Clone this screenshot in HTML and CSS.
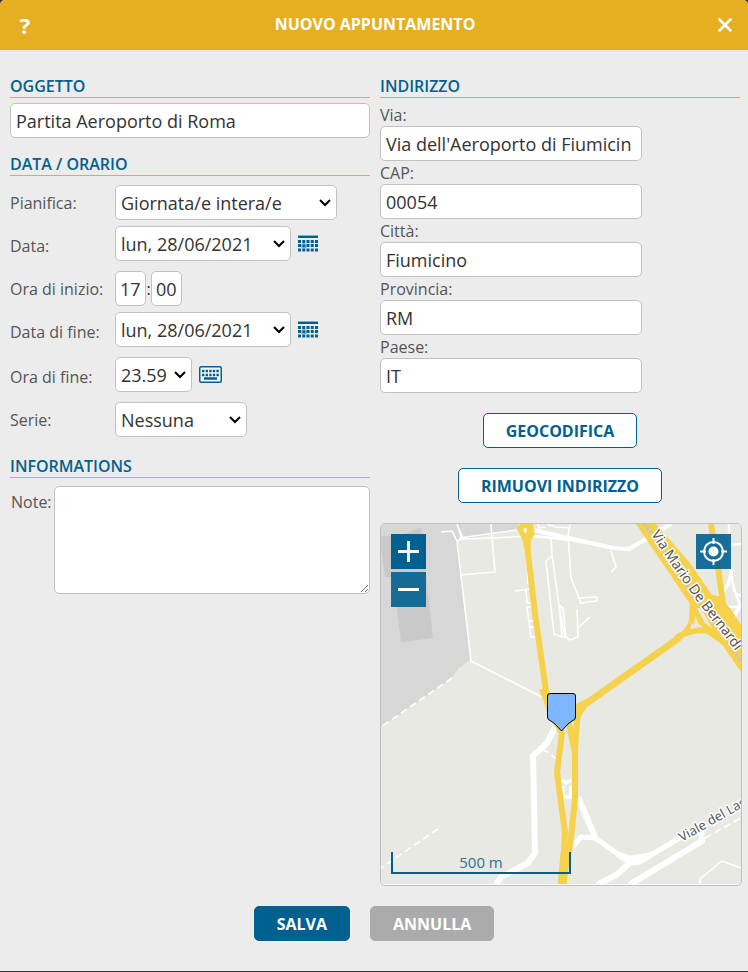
FILE: index.html
```html
<!DOCTYPE html>
<html lang="it">
<head>
<meta charset="utf-8">
<meta name="viewport" content="width=device-width, initial-scale=1">
<title>Nuovo appuntamento</title>
<link rel="stylesheet" href="styles.css">
</head>
<body>
<svg class="defs" aria-hidden="true">
  <defs>
    <symbol id="calendar" viewBox="0 0 20 17">
      <path d="M0 0h20v3H0z" fill="#7fb0c8"/>
      <path d="M0 1h20v2H0z" fill="#006190"/>
      <path d="M0 6.500h20M0 10.500h20M0 15h20" fill="none" stroke="#006190" stroke-width="2.800" stroke-dasharray="3 1.250"/>
      <circle cx="6" cy="11" r="3" fill="#5b9bbb" fill-opacity=".7"/>
      <path d="M5 10h2v2H5z" fill="#006190"/>
    </symbol>
    <symbol id="keyboard" viewBox="0 0 23 17">
      <rect x=".75" y=".75" width="21.500" height="15.500" rx="1.500" fill="#f5fafc" stroke="#006190" stroke-width="1.500"/>
      <path d="M3 5h17M3 9h17" stroke="#006190" stroke-width="2.400" stroke-dasharray="2.400 1.200"/>
      <path d="M5 12.500h13" stroke="#006190" stroke-width="2.400"/>
    </symbol>
  </defs>
</svg>
<form class="dialog">
  <header class="titlebar">
    <button type="button" class="title-button" aria-label="Aiuto">?</button>
    <h1 class="title">NUOVO APPUNTAMENTO</h1>
    <button type="button" class="title-button" aria-label="Chiudi">
      <svg width="14" height="14" viewBox="0 0 14 14"><path d="M1.500 1.500l11 11M12.500 1.500l-11 11" stroke="#fff" stroke-width="2.600" stroke-linecap="round"/></svg>
    </button>
  </header>

  <main class="columns">
    <div class="column">
      <section class="section">
        <h2 class="heading"><label for="subject">OGGETTO</label></h2>
        <input class="field field-wide" id="subject" type="text" value="Partita Aeroporto di Roma">
      </section>

      <section class="section">
        <h2 class="heading">DATA / ORARIO</h2>
        <div class="rows">
          <div class="row">
            <label class="row-label" for="plan">Pianifica:</label>
            <select class="field select-plan" id="plan"><option>Giornata/e intera/e</option></select>
          </div>
          <div class="row row-date">
            <label class="row-label row-label-low" for="start-date">Data:</label>
            <select class="field select-date" id="start-date"><option>lun, 28/06/2021</option></select>
            <button type="button" class="icon-button" aria-label="Calendario"><svg width="20" height="17"><use href="#calendar"/></svg></button>
          </div>
          <div class="row">
            <label class="row-label" for="start-hour">Ora di inizio:</label>
            <input class="field field-time" id="start-hour" type="text" value="17">
            <span class="colon">:</span>
            <input class="field field-time" type="text" value="00" aria-label="Minuti">
          </div>
          <div class="row row-date">
            <label class="row-label row-label-low" for="end-date">Data di fine:</label>
            <select class="field select-date" id="end-date"><option>lun, 28/06/2021</option></select>
            <button type="button" class="icon-button" aria-label="Calendario"><svg width="20" height="17"><use href="#calendar"/></svg></button>
          </div>
          <div class="row">
            <label class="row-label row-label-low" for="end-time">Ora di fine:</label>
            <select class="field select-time" id="end-time"><option>23.59</option></select>
            <button type="button" class="icon-button" aria-label="Tastiera"><svg width="23" height="17"><use href="#keyboard"/></svg></button>
          </div>
          <div class="row">
            <label class="row-label" for="series">Serie:</label>
            <select class="field select-series" id="series"><option>Nessuna</option></select>
          </div>
        </div>
      </section>

      <section class="section">
        <h2 class="heading">INFORMATIONS</h2>
        <div class="note">
          <label class="note-label" for="note">Note:</label>
          <textarea class="field note-field" id="note"></textarea>
        </div>
      </section>
    </div>

    <div class="column">
      <section class="section">
        <h2 class="heading">INDIRIZZO</h2>
        <div class="address">
          <label class="address-label" for="street">Via:</label>
          <input class="field" id="street" type="text" value="Via dell'Aeroporto di Fiumicin">
          <label class="address-label" for="zip">CAP:</label>
          <input class="field" id="zip" type="text" value="00054">
          <label class="address-label" for="city">Città:</label>
          <input class="field" id="city" type="text" value="Fiumicino">
          <label class="address-label" for="province">Provincia:</label>
          <input class="field" id="province" type="text" value="RM">
          <label class="address-label" for="country">Paese:</label>
          <input class="field" id="country" type="text" value="IT">
        </div>
        <div class="address-actions">
          <button type="button" class="button button-outline">GEOCODIFICA</button>
          <button type="button" class="button button-outline">RIMUOVI INDIRIZZO</button>
        </div>
        <div class="map">
          <svg class="map-canvas" viewBox="0 0 360 360" preserveAspectRatio="xMidYMid slice" role="img" aria-label="Mappa">
            <path fill="#e8e9e3" d="M0 0h360v360H0z"/>
            <path fill="#d7d7d7" d="M0 0H137L139 6 77 16 90 135 78 144 71 154 33 181 0 203z"/>
            <path fill="#c9c9c9" d="M0 12H18L40 4 45 50 52 114 20 118 15 76 11 53H4L0 25z"/>
            <g fill="none" stroke="#fff" stroke-width="1.600" stroke-linejoin="round">
              <path d="M60 8L71 7 76 17 80 51 90 137 161 173"/>
              <path d="M76 0L81 15M78 5L82 14M76 17L81 15 111 14 150 12M78 14L136 6"/>
              <path d="M110 0L111 14 114 48 79 51M146 24L147 60M134 67L149 65M145 66L146 79H150"/>
              <path d="M152 83H146L150 113H155M148 97H153M149 103H154"/>
              <path d="M170 15L171 31 178 81 181 113M171 32L165 37 173 110 181 113 184 113 178 81 182 84 185 113 189 116 197 113 196 85M198 103L209 93"/>
              <path d="M189 0L187 11 190 54 200 79 216 77 216 73 199 74M177 3L188 4M157 0L158 4 164 3M166 0L177 4"/>
              <path d="M230 27L235 43 230 48"/>
              <path d="M348 0V40L353 65 359 81M350 21L360 20M347 61L337 73H330M345 83H360M352 92L360 80M354 69L360 72" stroke-width="2.500"/>
              <path d="M351 46L347 61 337 73M359 82L353 93" stroke-width="3.500"/>
              <path d="M319 360V355L341 337 360 344"/>
              <path d="M71 154L0 203M57 305L0 344M161 226L167 228 175 235M324 314L360 294" stroke-dasharray="7 4"/>
            </g>
            <g fill="none" stroke="#fff" stroke-linejoin="round">
              <path d="M152 6L232 24 248 25 265 15 290 0" stroke-width="4"/>
              <path d="M152 12L190 16 232 24" stroke-width="2.500"/>
              <path d="M174 203L166 219 152 232 154 329 147 339 120 353 114 362" stroke-width="6"/>
              <path d="M180 256L185 259 190 256M182 262V273H190V262M177 256L182 273" stroke-width="3.500"/>
              <path d="M197 273L214 313" stroke-width="6"/>
              <path d="M191 323L200 313 214 314 237 330 249 334 270 331 302 312" stroke-width="5"/>
              <path d="M237 330L249 339 235 351 216 361M249 339L257 338 270 331M320 303L321 317 248 361" stroke-width="6"/>
            </g>
            <g fill="none" stroke="#f6d14b" stroke-linejoin="round">
              <path d="M146 20L154 90 167 181 176 200" stroke-width="6"/>
              <path d="M161 165L168 182 181 210 176 248 184 309 181 362" stroke-width="6"/>
              <path d="M197 182L194 226 194 276 189 322 181 362M187 195L194 229" stroke-width="6"/>
              <path d="M184 330L181 362" stroke-width="9"/>
              <path d="M195 193L203 181 298 114" stroke-width="7"/>
              <path d="M298 114Q311 103 311 95L312 76M295 114Q312 104 327 107L340 116M315 86L320 98 334 108" stroke-width="6"/>
              <path d="M330 0L338 50 343 88" stroke-width="6"/>
            </g>
            <path fill="#f6d14b" d="M136 5L139 0H152L154 10 150 16 149 26H144L141 15zM193 181L207 174 205 183 198 196zM255 0H275L309 39 331 71 338 72 349 84 360 101V148L342 122 328 108 309 80z"/>
            <path fill="#e8e9e3" d="M316 84L320 84 331 104 324 99zM311 99L316 104 309 105z"/>
            <path fill="#fff" d="M142 5L145 4 146 7 145 9 143 8z"/>
            <path fill="none" stroke="#c8c7bd" stroke-width="4" stroke-dasharray="3 2" d="M263 -1L286 31 312 70 340 106 360 137"/>
            <path id="bernardi" fill="none" d="M270 10L285 33 313 73 342 110 372 151"/>
            <path id="viale" fill="none" d="M301 318L371 278"/>
            <text class="street"><textPath href="#bernardi">Via Mario De Bernardi</textPath></text>
            <text class="street street-minor"><textPath href="#viale">Viale del Las</textPath></text>
            <path fill="#7db7ff" stroke="#000" d="M169 169.500H192Q194.500 169.500 194.500 172V193Q194.500 196 191 197L187 200 180.500 207 174 200 170 197Q166.500 196 166.500 193V172Q166.500 169.500 169 169.500z"/>
          </svg>
          <div class="zoom">
            <button type="button" class="map-button map-button-active" aria-label="Ingrandisci"><svg width="21" height="21"><path d="M10.500 0v21M0 10.500h21" stroke="#fff" stroke-width="3"/></svg></button>
            <button type="button" class="map-button" aria-label="Riduci"><svg width="21" height="21"><path d="M0 10.500h21" stroke="#fff" stroke-width="3"/></svg></button>
          </div>
          <button type="button" class="map-button locate" aria-label="Posizione"><svg width="27" height="27" viewBox="0 0 27 27"><circle cx="13.500" cy="13.500" r="9.500" fill="none" stroke="#fff" stroke-width="2"/><circle cx="13.500" cy="13.500" r="5" fill="#fff"/><path d="M13.500 0v6M13.500 21v6M0 13.500h6M21 13.500h6" stroke="#fff" stroke-width="2"/></svg></button>
          <div class="scale">500 m</div>
        </div>
      </section>
    </div>
  </main>

  <footer class="footer">
    <button type="submit" class="button button-primary">SALVA</button>
    <button type="button" class="button button-muted">ANNULLA</button>
  </footer>
</form>
</body>
</html>
```
FILE: styles.css
```css
* { box-sizing: border-box; }

body {
  margin: 0;
  background: #333;
  color: #555;
  font: 400 16px/22px "Open Sans", "Noto Sans", sans-serif;
}

button, input, select, textarea { font: inherit; margin: 0; }

.defs { position: absolute; width: 0; height: 0; }

.dialog {
  min-height: calc(100vh - 1px);
  background: #ececec;
  border-radius: 5px 5px 0 0;
  overflow: hidden;
}

.titlebar {
  display: flex;
  align-items: center;
  height: 50px;
  padding: 0 0 0 2px;
  background: #e6af22;
  color: #fff;
}

.title {
  flex: 1;
  margin: 0;
  padding-bottom: 2px;
  text-align: center;
  font-size: 16px;
  font-weight: 700;
}

.title-button {
  display: flex;
  align-items: center;
  justify-content: center;
  width: 46px;
  height: 46px;
  padding: 0;
  border: 0;
  background: none;
  color: #fff;
  font-size: 22px;
  font-weight: 700;
}

.columns {
  display: grid;
  grid-template-columns: 1fr 1fr;
  gap: 10px;
  padding: 25px 8px 0 10px;
}

.column { min-width: 0; }

.section + .section { margin-top: 15px; }

.heading {
  margin: 0 0 5px;
  border-bottom: 1px solid #e6af22;
  color: #006190;
  font-size: 16px;
  font-weight: 600;
  line-height: 22px;
}

.field {
  height: 35px;
  padding: 0 5px;
  border: 1px solid #bdc3c5;
  border-radius: 5px;
  background-color: #fff;
  color: #333;
  font-size: 18px;
}

select.field {
  appearance: none;
  padding-right: 20px;
  background-image: url("data:image/svg+xml,%3Csvg xmlns='http://www.w3.org/2000/svg' width='12' height='8'%3E%3Cpath d='M1 1l5 5 5-5' fill='none' stroke='%23000' stroke-width='2'/%3E%3C/svg%3E");
  background-repeat: no-repeat;
  background-position: right 5px center;
}

.field-wide { display: block; width: 100%; }

.rows { padding: 4px 0 3px; }

.row {
  display: flex;
  align-items: center;
}

.row + .row { margin-top: 10px; }

.row + .row-date { margin-top: 6px; }

.row-label { width: 105px; white-space: nowrap; }

.row-label-low { padding-top: 4px; }

.select-plan { width: 222px; }

.select-date { width: 176px; }

.select-time { width: 77px; }

.select-series { width: 132px; }

.field-time { width: 31px; padding: 0 4px; }

.colon { width: 5px; color: #222; text-align: center; }

.icon-button {
  display: flex;
  margin-left: 6px;
  padding: 0 1px 1px;
  border: 0;
  background: none;
}

.note {
  display: flex;
  padding: 3px 0 0 1px;
}

.note-label { width: 43px; padding-top: 5px; }

.note-field {
  flex: 1;
  min-width: 0;
  height: 108px;
}

.address {
  display: flex;
  flex-direction: column;
  align-items: flex-start;
}

.address-label { height: 23px; line-height: 24px; }

.address .field { width: 262px; max-width: 100%; }

.address-actions {
  display: flex;
  flex-direction: column;
  align-items: center;
  gap: 20px;
  padding: 20px 0;
}

.button {
  height: 35px;
  padding: 0 22px;
  border: 1px solid #006190;
  border-radius: 5px;
  font-weight: 700;
}

.button-outline { background: #fff; color: #006190; }

.button-primary { background: #006190; color: #fff; }

.button-muted { border-color: #ababab; background: #ababab; color: #fff; }

.map {
  position: relative;
  margin-right: -2px;
  padding-bottom: 1px;
  overflow: hidden;
  border: 1px solid #bdc0c6;
  border-radius: 5px;
  background: #fff;
}

.map-canvas { display: block; width: 100%; }

.street {
  fill: #555;
  stroke: #fff;
  stroke-width: 3px;
  stroke-linejoin: round;
  paint-order: stroke;
  font: 400 14px "Noto Sans", sans-serif;
}

.street-minor { font-size: 13px; }

.zoom {
  position: absolute;
  top: 10px;
  left: 10px;
  display: grid;
  gap: 3px;
}

.map-button {
  display: flex;
  align-items: center;
  justify-content: center;
  width: 35px;
  height: 35px;
  padding: 0;
  border: 0;
  background: rgba(0, 97, 144, .9);
}

.map-button-active { background: #006190; }

.locate {
  position: absolute;
  top: 10px;
  right: 10px;
}

.scale {
  position: absolute;
  bottom: 11px;
  left: 10px;
  width: 180px;
  height: 22px;
  border: 2px solid #006190;
  border-top: 0;
  color: #2b7499;
  font-size: 15px;
  line-height: 20px;
  text-align: center;
}

.footer {
  display: flex;
  justify-content: center;
  gap: 20px;
  padding: 20px 0 30px;
}
```
